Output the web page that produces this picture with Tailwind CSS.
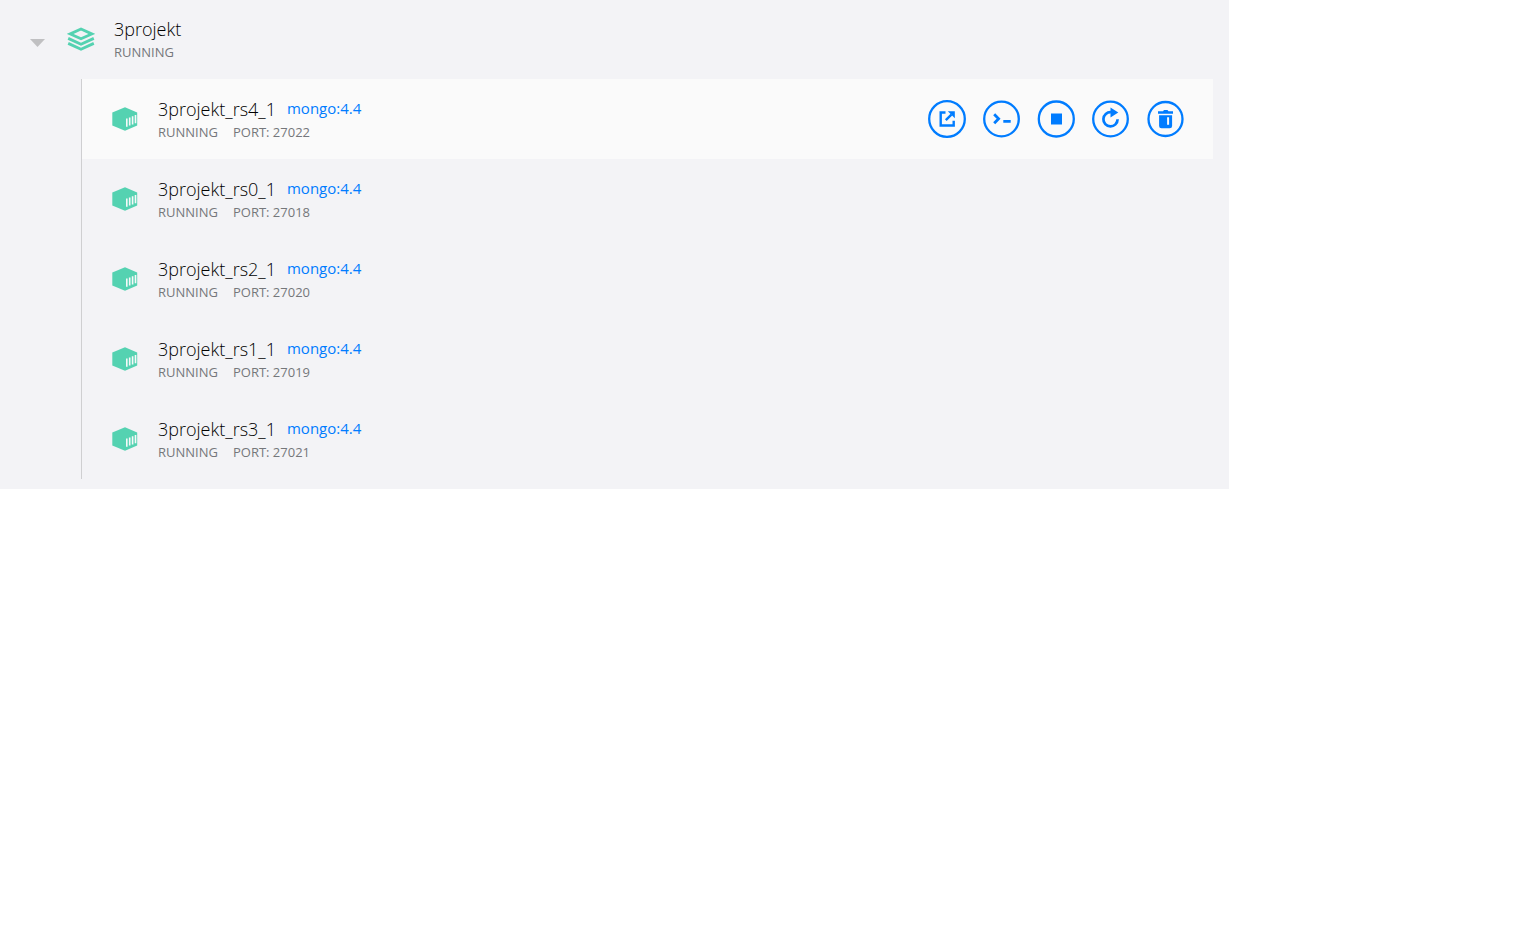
<!DOCTYPE html>
<html lang="en">
<head>
    <meta charset="UTF-8">
    <meta name="viewport" content="width=device-width, initial-scale=1.0">
    <title>Containers</title>
    <script src="https://cdn.jsdelivr.net/npm/@tailwindcss/browser@4"></script>
</head>
<body class="bg-white font-['Open_Sans',sans-serif] text-black">

    <!-- Shared icon -->
    <svg class="hidden">
        <symbol id="container" viewBox="0 0 26 24">
            <path fill="#54d2b1" d="M13 .3 25.2 5.5v13L13 23.7.3 18.5v-13z"/>
            <path stroke="#f7f8f9" stroke-width="1.6" d="M14.8 11.6v8.2M17.7 10.4v8.2M20.6 9.2v8.2M23.5 8v8.2"/>
        </symbol>
    </svg>

    <main class="w-4/5 bg-[#f3f3f6] pr-4 pb-[10px]">
        <!-- Compose group -->
        <header class="flex h-[79px] items-center pb-0.5">
            <button type="button" aria-label="Collapse 3projekt" class="ml-[30px] pt-2">
                <svg class="h-2 w-[15px]" viewBox="0 0 15 8"><path fill="#c0c0c2" d="M0 0h15L7.5 8z"/></svg>
            </button>
            <svg class="ml-[22px] h-6 w-7" viewBox="0 0 28 24" fill="none" stroke="#54d2b1" stroke-width="2.8">
                <path d="M14 2 24.8 6.9 14 11.8 3.2 6.9z"/>
                <path d="m1.2 11.4 12.8 5.8 12.8-5.8M1.2 16.4 14 22.2l12.8-5.8"/>
            </svg>
            <div class="ml-[19px]">
                <h1 class="text-[18px] leading-[26px] font-light">3projekt</h1>
                <p class="text-[13px] leading-5 text-[#75777b]">RUNNING</p>
            </div>
        </header>

        <!-- Containers -->
        <ul class="ml-[81px] border-l border-[#cfcfd1]">
            <li class="flex h-20 items-center justify-between bg-[#fafafa] pr-[29px] pl-[30px]">
                <div class="flex items-center gap-5">
                    <svg class="h-6 w-[26px]"><use href="#container"/></svg>
                    <div>
                        <h2 class="flex gap-[11px] text-[18px] leading-[26px] font-light">3projekt_rs4_1 <a href="#" class="text-[15px] leading-6 font-normal text-[#007cff]">mongo:4.4</a></h2>
                        <p class="flex gap-[15px] text-[13px] leading-5 text-[#75777b]"><span>RUNNING</span><span>PORT: 27022</span></p>
                    </div>
                </div>
                <div class="flex w-64 justify-between text-[#007cff]">
                    <button type="button" aria-label="Open in browser">
                        <svg class="size-[38px]" viewBox="0 0 38 38" fill="none" stroke="currentColor" stroke-width="2.4">
                            <circle cx="19" cy="19" r="17.8" stroke-width="2.3"/>
                            <path d="M17.5 12.5h-4.8v13h13v-4.8M17.8 20.2l5.6-5.6"/>
                            <path fill="currentColor" stroke="none" d="M19.8 11.2h7v7z"/>
                        </svg>
                    </button>
                    <button type="button" aria-label="Open terminal">
                        <svg class="size-[38px]" viewBox="0 0 38 38" fill="none" stroke="currentColor" stroke-width="2.8">
                            <circle cx="19.5" cy="19" r="17.3" stroke-width="2.3"/>
                            <path d="m12.2 14.2 4.4 4.5-4.4 4.5M21.3 21.3h7.4"/>
                        </svg>
                    </button>
                    <button type="button" aria-label="Stop">
                        <svg class="size-[38px]" viewBox="0 0 38 38" fill="none" stroke="currentColor">
                            <circle cx="19.3" cy="19" r="17.5" stroke-width="2.3"/>
                            <path fill="currentColor" stroke="none" d="M14 13.5h11v11H14z"/>
                        </svg>
                    </button>
                    <button type="button" aria-label="Restart">
                        <svg class="size-[38px]" viewBox="0 0 38 38" fill="none" stroke="currentColor" stroke-width="2.7">
                            <circle cx="19.5" cy="19" r="17.3" stroke-width="2.3"/>
                            <path d="M20 12.2a7.1 7.1 0 1 0 6.6 7.1"/>
                            <path fill="currentColor" stroke="none" d="m19.5 7.6 7.8 5-7.8 5z"/>
                        </svg>
                    </button>
                    <button type="button" aria-label="Delete">
                        <svg class="size-[38px]" viewBox="0 0 38 38" fill="none" stroke="currentColor">
                            <circle cx="19.5" cy="19" r="17" stroke-width="2.3"/>
                            <path fill="currentColor" stroke="none" fill-rule="evenodd" d="M12 11.2h5l1-1.2h3.5l1 1.2H27v2.6H12zM13.1 15.3h13v10.6a2.4 2.4 0 0 1-2.4 2.4h-8.2a2.4 2.4 0 0 1-2.4-2.4zM21.1 17.3v7.4h2v-7.4z"/>
                        </svg>
                    </button>
                </div>
            </li>
            <li class="flex h-20 items-center gap-5 pl-[30px]">
                <svg class="h-6 w-[26px]"><use href="#container"/></svg>
                <div>
                    <h2 class="flex gap-[11px] text-[18px] leading-[26px] font-light">3projekt_rs0_1 <a href="#" class="text-[15px] leading-6 font-normal text-[#007cff]">mongo:4.4</a></h2>
                    <p class="flex gap-[15px] text-[13px] leading-5 text-[#75777b]"><span>RUNNING</span><span>PORT: 27018</span></p>
                </div>
            </li>
            <li class="flex h-20 items-center gap-5 pl-[30px]">
                <svg class="h-6 w-[26px]"><use href="#container"/></svg>
                <div>
                    <h2 class="flex gap-[11px] text-[18px] leading-[26px] font-light">3projekt_rs2_1 <a href="#" class="text-[15px] leading-6 font-normal text-[#007cff]">mongo:4.4</a></h2>
                    <p class="flex gap-[15px] text-[13px] leading-5 text-[#75777b]"><span>RUNNING</span><span>PORT: 27020</span></p>
                </div>
            </li>
            <li class="flex h-20 items-center gap-5 pl-[30px]">
                <svg class="h-6 w-[26px]"><use href="#container"/></svg>
                <div>
                    <h2 class="flex gap-[11px] text-[18px] leading-[26px] font-light">3projekt_rs1_1 <a href="#" class="text-[15px] leading-6 font-normal text-[#007cff]">mongo:4.4</a></h2>
                    <p class="flex gap-[15px] text-[13px] leading-5 text-[#75777b]"><span>RUNNING</span><span>PORT: 27019</span></p>
                </div>
            </li>
            <li class="flex h-20 items-center gap-5 pl-[30px]">
                <svg class="h-6 w-[26px]"><use href="#container"/></svg>
                <div>
                    <h2 class="flex gap-[11px] text-[18px] leading-[26px] font-light">3projekt_rs3_1 <a href="#" class="text-[15px] leading-6 font-normal text-[#007cff]">mongo:4.4</a></h2>
                    <p class="flex gap-[15px] text-[13px] leading-5 text-[#75777b]"><span>RUNNING</span><span>PORT: 27021</span></p>
                </div>
            </li>
        </ul>
    </main>

</body>
</html>
